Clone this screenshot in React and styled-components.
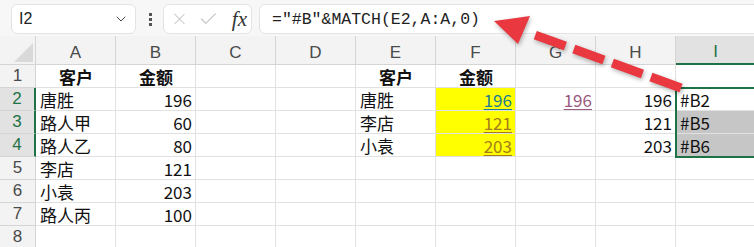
import React from 'react';
import styled, { createGlobalStyle } from 'styled-components';
import { ChevronDown, X, Check } from 'lucide-react';

const green = '#1f7246';
const gridLine = '#e1e1e1';
const headLine = '#d5d5d5';

const GlobalStyle = createGlobalStyle`
  body {
    margin: 0;
    background: #fff;
  }
`;

const Window = styled.div`
  position: relative;
  width: 754px;
  height: 247px;
  overflow: hidden;
  background: #fff;
  font-family: 'Noto Sans CJK SC', 'Noto Sans', sans-serif;
`;

const Toolbar = styled.div`
  display: flex;
  align-items: center;
  height: 36px;
  padding: 4px 0 2px 11px;
  box-sizing: border-box;
  background: #f7f7f7;
`;

const Box = styled.div`
  display: flex;
  align-items: center;
  height: 30px;
  box-sizing: border-box;
  background: #fff;
  border: 1px solid #e3e3e3;
  border-radius: 6px;
`;

const NameBox = styled(Box)`
  width: 125px;
  padding: 0 6px 0 7px;
  justify-content: space-between;
  font-family: 'Liberation Sans', sans-serif;
  font-size: 16px;
  color: #222;
`;

const Grip = styled.div`
  display: flex;
  flex-direction: column;
  gap: 2px;
  margin: 0 11px 0 13px;

  span {
    width: 3px;
    height: 3px;
    background: #555;
  }
`;

const FxBox = styled(Box)`
  width: 89px;
  padding: 0 4px 0 6px;
  gap: 9px;
  color: #c4c4c4;
`;

const Fx = styled.span`
  margin-left: 4px;
  font-family: 'Liberation Serif', serif;
  font-style: italic;
  font-size: 21px;
  color: #333;
`;

const FormulaBox = styled(Box)`
  flex: 1;
  margin: 0 -12px 0 7px;
  padding-left: 12px;
  font-family: 'Liberation Mono', monospace;
  font-size: 16.5px;
  color: #222;
`;

const Sheet = styled.div`
  display: grid;
  grid-template-columns: 36px repeat(9, 80px);
  grid-template-rows: 29px repeat(8, 23px);
`;

const Corner = styled.div`
  grid-row: 1;
  grid-column: 1;
  background: #f3f3f3;
  border-right: 1px solid ${headLine};
  border-bottom: 1px solid ${headLine};
  display: flex;
  align-items: flex-end;
  justify-content: flex-end;
  padding: 0 2px 2px 0;

  svg {
    display: block;
  }
`;

const ColHead = styled.div`
  grid-row: 1;
  grid-column: ${p => p.$col};
  display: flex;
  align-items: flex-end;
  justify-content: center;
  padding-bottom: 1px;
  box-sizing: border-box;
  background: ${p => (p.$active ? '#e2e2e2' : '#f3f3f3')};
  border-right: 1px solid ${headLine};
  border-bottom: ${p => (p.$active ? `2px solid ${green}` : `1px solid ${headLine}`)};
  font-family: 'Liberation Sans', sans-serif;
  font-size: 17px;
  line-height: 20px;
  color: ${p => (p.$active ? green : '#4a4a4a')};
`;

const RowHead = styled.div`
  grid-row: ${p => p.$row};
  grid-column: 1;
  display: flex;
  align-items: center;
  justify-content: center;
  box-sizing: border-box;
  background: ${p => (p.$active ? '#e2e2e2' : '#f3f3f3')};
  border-right: ${p => (p.$active ? `2px solid ${green}` : `1px solid ${headLine}`)};
  border-bottom: 1px solid ${headLine};
  font-family: 'Liberation Sans', sans-serif;
  font-size: 17px;
  color: ${p => (p.$active ? green : '#4a4a4a')};
`;

const Cell = styled.div`
  grid-row: ${p => p.$row};
  grid-column: ${p => p.$col};
  display: flex;
  align-items: center;
  justify-content: ${p =>
    p.$align === 'right' ? 'flex-end' : p.$align === 'center' ? 'center' : 'flex-start'};
  padding: 1px 3px 0 4px;
  box-sizing: border-box;
  overflow: hidden;
  white-space: nowrap;
  background: ${p => p.$fill || '#fff'};
  border-right: 1px solid ${gridLine};
  border-bottom: 1px solid ${gridLine};
  font-size: 17px;
  font-weight: ${p => (p.$bold ? 700 : 400)};
  color: #111;
`;

const Link = styled.span`
  color: ${p => p.$color};
  text-decoration: underline;
  text-decoration-color: ${p => p.$color};
  text-decoration-thickness: 1px;
  text-underline-offset: 2px;
`;

const Selection = styled.div`
  grid-column: 10;
  grid-row: 3 / 6;
  border: 2px solid ${green};
  margin: -1px 0 -1px -1px;
  pointer-events: none;
  z-index: 1;
`;

const Arrow = styled.svg`
  position: absolute;
  left: 0;
  top: 0;
  pointer-events: none;
  filter: drop-shadow(1px 2px 2px rgba(0, 0, 0, 0.3));
  z-index: 2;
`;

const columns = ['A', 'B', 'C', 'D', 'E', 'F', 'G', 'H', 'I'];

const link = (text, color) => <Link $color={color}>{text}</Link>;

const rows = [
  { A: ['客户', 'center', true], B: ['金额', 'center', true], E: ['客户', 'center', true], F: ['金额', 'center', true] },
  { A: ['唐胜'], B: ['196', 'right'], E: ['唐胜'], F: [link('196', '#1b7d95'), 'right', false, '#ffff00'], G: [link('196', '#9a5a7f'), 'right'], H: ['196', 'right'], I: ['#B2'] },
  { A: ['路人甲'], B: ['60', 'right'], E: ['李店'], F: [link('121', '#a47c1c'), 'right', false, '#ffff00'], H: ['121', 'right'], I: ['#B5', 'left', false, '#c6c6c6'] },
  { A: ['路人乙'], B: ['80', 'right'], E: ['小袁'], F: [link('203', '#a47c1c'), 'right', false, '#ffff00'], H: ['203', 'right'], I: ['#B6', 'left', false, '#c6c6c6'] },
  { A: ['李店'], B: ['121', 'right'] },
  { A: ['小袁'], B: ['203', 'right'] },
  { A: ['路人丙'], B: ['100', 'right'] },
  {}
];

export default function App() {
  return (
    <Window>
      <GlobalStyle />
      <Toolbar>
        <NameBox>
          <span>I2</span>
          <ChevronDown size={16} strokeWidth={1.5} color="#444" />
        </NameBox>
        <Grip>
          <span />
          <span />
          <span />
        </Grip>
        <FxBox>
          <X size={20} strokeWidth={1.3} />
          <Check size={22} strokeWidth={1.3} />
          <Fx>fx</Fx>
        </FxBox>
        <FormulaBox>="#B"&amp;MATCH(E2,A:A,0)</FormulaBox>
      </Toolbar>

      <Sheet>
        <Corner>
          <svg width="19" height="19" viewBox="0 0 19 19">
            <polygon points="19,0 19,19 0,19" fill="#d9d9d9" />
          </svg>
        </Corner>
        {columns.map((c, j) => (
          <ColHead key={c} $col={j + 2} $active={c === 'I'}>
            {c}
          </ColHead>
        ))}
        {rows.map((row, i) => (
          <React.Fragment key={i}>
            <RowHead $row={i + 2} $active={i >= 1 && i <= 3}>
              {i + 1}
            </RowHead>
            {columns.map((c, j) => {
              const [text, align, bold, fill] = row[c] || [];
              return (
                <Cell
                  key={c}
                  $row={i + 2}
                  $col={j + 2}
                  $align={align}
                  $bold={bold}
                  $fill={fill}
                >
                  {text}
                </Cell>
              );
            })}
          </React.Fragment>
        ))}
        <Selection />
      </Sheet>

      <Arrow width="754" height="247" viewBox="0 0 754 247">
        <line
          x1="681"
          y1="88"
          x2="535"
          y2="35"
          stroke="#e9383f"
          strokeWidth="9"
          strokeDasharray="32 9"
        />
        <polygon points="494,21 530,16 518,44" fill="#e9383f" />
      </Arrow>
    </Window>
  );
}
